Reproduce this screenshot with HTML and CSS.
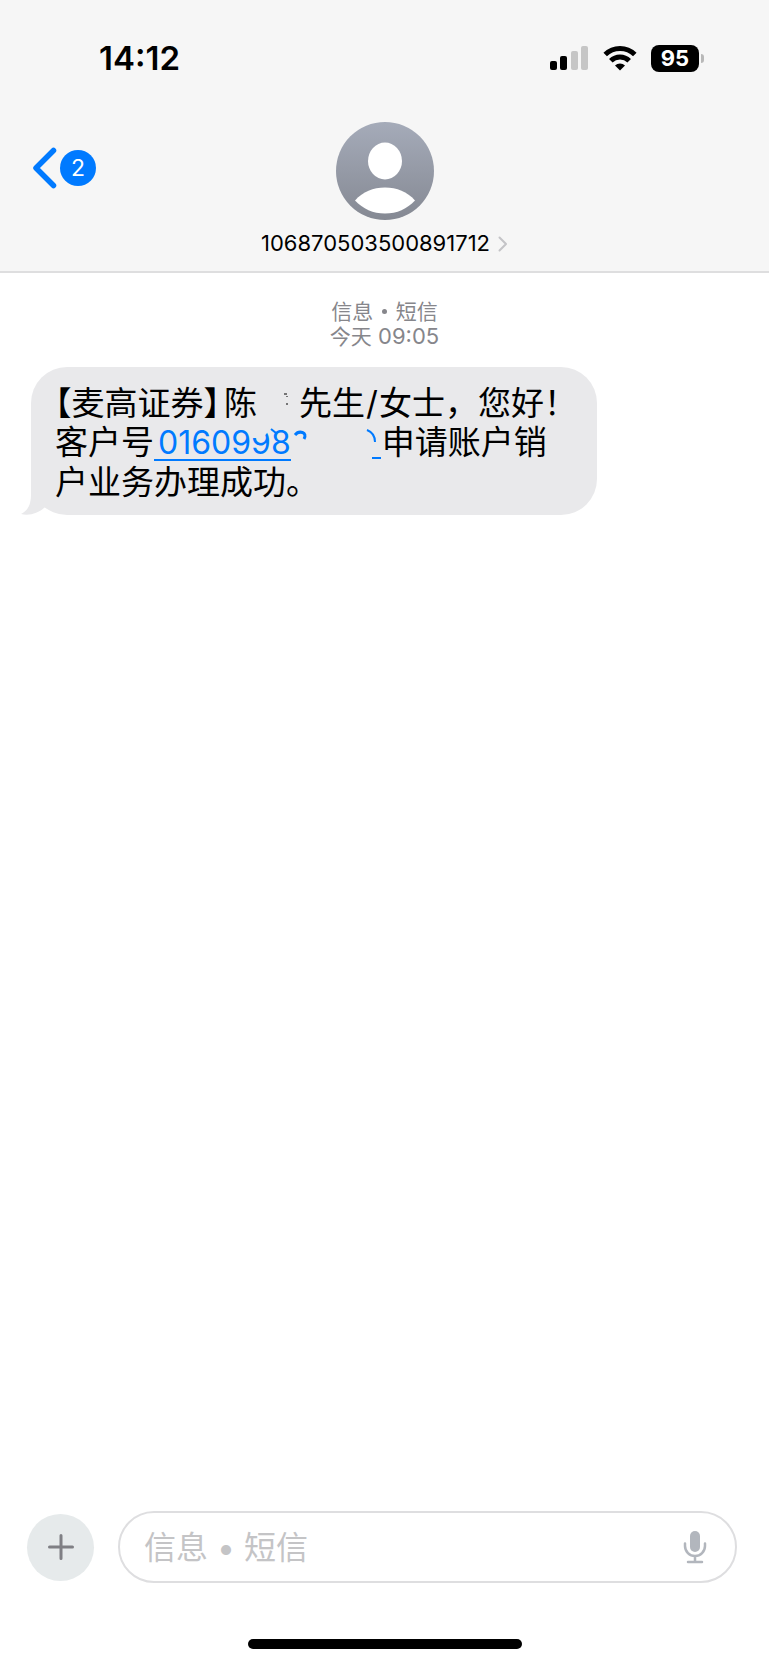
FILE: index.html
```
<!DOCTYPE html>
<html lang="zh-CN">
<head>
  <meta charset="UTF-8">
  <meta name="viewport" content="width=device-width, initial-scale=1.0">
  <title>信息</title>
  <link rel="stylesheet" href="styles.css">
</head>
<body>

<header>
  <div class="status">
    <time class="clock">14:12</time>
    <div class="status-icons">
      <svg width="39" height="26" viewBox="0 0 39 26" aria-hidden="true">
        <rect x="0" y="16" width="7" height="9" rx="2"/>
        <rect x="10" y="11" width="7" height="14" rx="2"/>
        <rect x="21" y="6" width="7" height="19" rx="2" fill="#c6c6c6"/>
        <rect x="31" y="1" width="7" height="24" rx="2" fill="#c6c6c6"/>
      </svg>
      <svg width="34" height="26" viewBox="0 0 34 26" aria-hidden="true">
        <g fill="none" stroke="#000" stroke-width="5">
          <path d="M2.2 9.6a21 21 0 0 1 29.6 0"/>
          <path d="M7.8 15.800a13 13 0 0 1 18.4 0"/>
        </g>
        <path d="M17 25.500l-5-5a7.500 7.500 0 0 1 10 0z"/>
      </svg>
      <div class="battery"><span>95</span></div>
    </div>
  </div>

  <div class="nav">
    <button class="back" aria-label="返回">
      <svg width="25" height="42" viewBox="0 0 25 42" aria-hidden="true">
        <path d="M21.500 3.500L4 21l17.500 17.500" fill="none" stroke="#007aff" stroke-width="5.500" stroke-linecap="round" stroke-linejoin="round"/>
      </svg>
      <span class="badge">2</span>
    </button>

    <button class="contact">
      <svg width="98" height="98" viewBox="0 0 98 98" aria-hidden="true">
        <defs>
          <linearGradient id="avatar" x1="0" y1="0" x2="0" y2="1">
            <stop offset="0" stop-color="#a5abb9"/>
            <stop offset="1" stop-color="#858993"/>
          </linearGradient>
        </defs>
        <circle cx="49" cy="49" r="49" fill="url(#avatar)"/>
        <ellipse cx="49" cy="39" rx="17" ry="18.500" fill="#fff"/>
        <path d="M19 78.500C27 69.500 37 65.500 49 65.500s22 4 30 13C71 87 61 91.500 49 91.500S27 87 19 78.500z" fill="#fff"/>
      </svg>
      <span class="number">106870503500891712
        <svg width="10" height="16" viewBox="0 0 10 16" aria-hidden="true">
          <path d="M1.500 1.500L8 8l-6.500 6.500" fill="none" stroke="#c4c4c7" stroke-width="2" stroke-linecap="round" stroke-linejoin="round"/>
        </svg>
      </span>
    </button>
  </div>
</header>

<main>
  <div class="date">
    <p>信息 <i class="dot"></i> 短信</p>
    <p>今天<span class="num"> 09:05</span></p>
  </div>

  <div class="bubble">
    <svg class="tail" width="30" height="40" viewBox="0 0 30 40" aria-hidden="true">
      <path d="M10 0v19c0 9-2 16-10 20 9 2 17-1 23-6l7-6V0z" fill="#e9e9eb"/>
    </svg>
    <p>
      <span class="half">【</span>麦高证券<span class="half close">】</span>陈<svg class="erased" width="42" height="30" viewBox="0 0 42 30" aria-hidden="true">
        <path d="M27 4h3M30 6v1M30 13v2" stroke="#000" fill="none"/>
      </svg>先生<span class="num slash">/</span>女士，您好！<br>
      客户号<a class="num" href="tel:0160998">0160998<svg class="smudge" width="44" height="32" viewBox="0 0 44 32" aria-hidden="true">
        <path d="M3 2h17v4l-4 5H3z" fill="#e9e9eb"/>
        <path d="M24 2l5 4" stroke="#007aff" stroke-width="2"/>
      </svg></a><svg class="erased" width="91" height="32" viewBox="0 0 91 32" aria-hidden="true">
        <g fill="none" stroke="#007aff">
          <path d="M4 8c4-5 13-3 9 4" stroke-width="3"/>
          <path d="M76 3c5 2 8 6 8 12" stroke-width="2"/>
          <path d="M81 31h9" stroke-width="2"/>
        </g>
      </svg>申请账户销<br>
      户业务办理成功。
    </p>
  </div>
</main>

<footer>
  <button class="plus" aria-label="添加">
    <svg width="26" height="26" viewBox="0 0 26 26" aria-hidden="true">
      <path d="M13 1.500v23M1.500 13h23" stroke="#7f7f84" stroke-width="3" stroke-linecap="round"/>
    </svg>
  </button>
  <div class="field">
    <input type="text" placeholder="信息 • 短信" aria-label="信息">
    <button class="mic" aria-label="听写">
      <svg width="24" height="34" viewBox="0 0 24 34" aria-hidden="true">
        <rect x="7" y="1" width="10" height="21" rx="5" fill="#b2b6bd"/>
        <path d="M2 13.500V16a10 10 0 0 0 20 0v-2.500M12 26v6M5 32h14" fill="none" stroke="#b2b6bd" stroke-width="2.500" stroke-linecap="round"/>
      </svg>
    </button>
  </div>
</footer>
<div class="home-bar"></div>

</body>
</html>
```
FILE: styles.css
```
* {
  box-sizing: border-box;
  margin: 0;
  padding: 0;
}

body {
  display: flex;
  flex-direction: column;
  min-height: 100vh;
  background: #fff;
  color: #000;
  font-family: "Noto Sans CJK SC", sans-serif;
}

button {
  border: none;
  background: none;
  font: inherit;
  color: inherit;
  cursor: pointer;
}

svg {
  display: block;
}

.num, .clock, .battery, .badge, .number {
  font-family: Inter, sans-serif;
}

.num {
  line-height: 1;
}

header {
  padding-top: 38px;
  background: #f6f6f6;
  border-bottom: 2px solid #dededf;
}

.status {
  display: flex;
  justify-content: space-between;
  align-items: center;
  height: 40px;
  padding: 0 70px 0 99px;
}

.clock {
  font-size: 33px;
  font-weight: 600;
}

.status-icons {
  display: flex;
  align-items: center;
  gap: 14px;
}

.battery {
  position: relative;
  width: 48px;
  height: 27px;
  border-radius: 8px;
  background: #000;
  color: #fff;
  font-size: 22px;
  font-weight: 700;
  line-height: 27px;
  text-align: center;
}

.battery::after {
  content: "";
  position: absolute;
  top: 9px;
  right: -5px;
  width: 3px;
  height: 9px;
  border-radius: 0 4px 4px 0;
  background: #b8b8b8;
}

.nav {
  display: grid;
  grid-template-columns: 1fr auto 1fr;
  align-items: start;
  padding: 44px 32px 14px;
}

.back {
  display: flex;
  align-items: center;
  justify-self: start;
  gap: 3px;
  margin-top: 25px;
}

.badge {
  width: 36px;
  height: 36px;
  border-radius: 50%;
  background: #007aff;
  color: #fff;
  font-size: 23px;
  line-height: 36px;
}

.contact {
  display: flex;
  flex-direction: column;
  align-items: center;
  gap: 10px;
}

.number {
  display: flex;
  align-items: center;
  gap: 8px;
  font-size: 22px;
  line-height: 27px;
}

main {
  flex: 1;
  padding: 25px 31px;
}

.date {
  color: #86868b;
  font-size: 21px;
  line-height: 25px;
  text-align: center;
}

.date .num {
  font-size: 22px;
  white-space: pre;
}

.dot {
  display: inline-block;
  width: 5px;
  height: 5px;
  margin: 0 4px;
  border-radius: 50%;
  background: currentColor;
  vertical-align: 5px;
}

.bubble {
  position: relative;
  width: fit-content;
  margin-top: 19px;
  padding: 15px 20px 15px 24px;
  border-radius: 36px;
  background: #e9e9eb;
  font-size: 33px;
  line-height: 39px;
}

.bubble p {
  white-space: nowrap;
}

.bubble a {
  position: relative;
  display: inline-block;
  padding-left: 4px;
  color: #007aff;
  font-size: 32px;
  text-decoration: none;
  border-bottom: 2px solid #007aff;
}

.smudge {
  position: absolute;
  top: 0;
  right: 0;
}

.tail {
  position: absolute;
  left: -10px;
  bottom: 0;
}

.half {
  font-feature-settings: "halt";
}

.close {
  padding-right: 4px;
}

.slash {
  padding: 0 1px;
}

.erased {
  display: inline-block;
  vertical-align: -5px;
}

footer {
  display: flex;
  align-items: center;
  gap: 24px;
  padding: 0 32px 0 27px;
}

.plus {
  display: flex;
  align-items: center;
  justify-content: center;
  width: 67px;
  height: 67px;
  border-radius: 50%;
  background: #e6eaeb;
}

.field {
  display: flex;
  flex: 1;
  align-items: center;
  height: 72px;
  padding: 0 28px 0 24px;
  border: 2px solid #dedee0;
  border-radius: 36px;
}

.field input {
  flex: 1;
  min-width: 0;
  border: none;
  outline: none;
  background: none;
  font-family: Inter, "Noto Sans CJK SC", sans-serif;
  font-size: 32px;
}

.field input::placeholder {
  color: #c4c4c6;
}

.home-bar {
  width: 274px;
  height: 10px;
  margin: 56px auto 16px;
  border-radius: 5px;
  background: #000;
}
```
